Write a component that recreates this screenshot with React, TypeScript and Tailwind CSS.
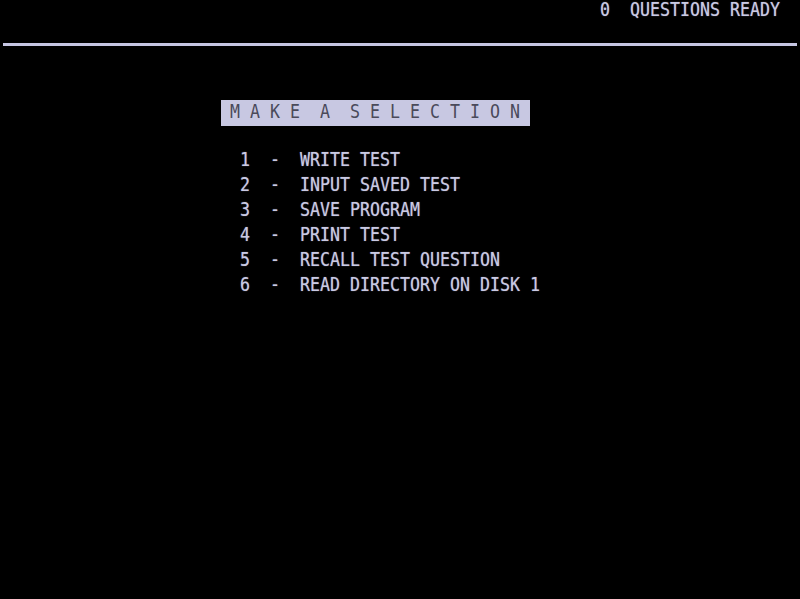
import React from "react";

const FG = "text-[#cacae4]";

function Row({ children, pad = 0 }: { children?: React.ReactNode; pad?: number }) {
  return (
    <div className="h-[25px] w-full shrink-0">
      <div
        className={`whitespace-pre leading-[16px] origin-top scale-y-[1.22] ${FG}`}
        style={{ paddingLeft: pad }}
      >
        {children}
      </div>
    </div>
  );
}

const items = [
  "WRITE TEST",
  "INPUT SAVED TEST",
  "SAVE PROGRAM",
  "PRINT TEST",
  "RECALL TEST QUESTION",
  "READ DIRECTORY ON DISK 1",
];

export default function App() {
  return (
    <div
      className="w-[800px] h-[599px] bg-black overflow-hidden flex flex-col text-[16.61px] [text-shadow:0_0_1px_rgba(202,202,228,0.6)]"
      style={{ fontFamily: '"DejaVu Sans Mono", "Liberation Mono", monospace' }}
    >
      <Row pad={600}>0  QUESTIONS READY</Row>
      <div className="h-[25px] w-full shrink-0 pt-[18px] px-[3px]">
        <div className="h-[3px] bg-[#c6c6e2]" />
      </div>
      <Row />
      <Row />
      <div className="h-[25px] w-full shrink-0 pl-[221px]">
        <div className="w-[309px] h-[26px] bg-[#c8c8e2]">
          <div className="whitespace-pre leading-[16px] origin-top scale-y-[1.22] pt-[2px] text-[#4a4a5a] [text-shadow:none] -ml-[1px]">
            {" M A K E  A  S E L E C T I O N "}
          </div>
        </div>
      </div>
      <Row />
      {items.map((t, i) => (
        <Row key={i} pad={240}>{`${i + 1}  -  ${t}`}</Row>
      ))}
    </div>
  );
}
